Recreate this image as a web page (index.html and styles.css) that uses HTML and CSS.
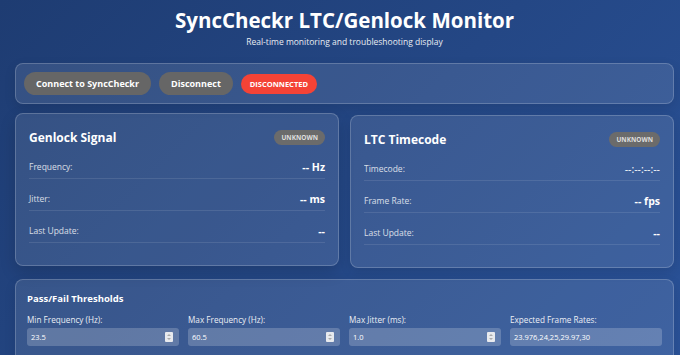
FILE: index.html
```html
<!DOCTYPE html>
<html lang="en">

<head>
    <meta charset="UTF-8">
    <title>SyncCheckr LTC/Genlock Monitor</title>
    <link rel="stylesheet" href="styles.css">
</head>

<body>
    <div class="container">

        <div class="header">
            <h1>SyncCheckr LTC/Genlock Monitor</h1>
            <p>Real-time monitoring and troubleshooting display</p>
        </div>

        <div class="panel controls">
            <button class="btn">Connect to SyncCheckr</button>
            <button class="btn">Disconnect</button>
            <span class="conn_status">DISCONNECTED</span>
        </div>

        <div class="cards">
            <div class="panel card card_raised">
                <div class="card_head">
                    <h2>Genlock Signal</h2>
                    <span class="badge">UNKNOWN</span>
                </div>
                <div class="row"><span class="row_label">Frequency:</span><span class="row_value">-- Hz</span></div>
                <div class="row"><span class="row_label">Jitter:</span><span class="row_value">-- ms</span></div>
                <div class="row"><span class="row_label">Last Update:</span><span class="row_value">--</span></div>
            </div>

            <div class="panel card">
                <div class="card_head">
                    <h2>LTC Timecode</h2>
                    <span class="badge">UNKNOWN</span>
                </div>
                <div class="row"><span class="row_label">Timecode:</span><span class="row_value tc">--:--:--:--</span></div>
                <div class="row"><span class="row_label">Frame Rate:</span><span class="row_value">-- fps</span></div>
                <div class="row"><span class="row_label">Last Update:</span><span class="row_value">--</span></div>
            </div>
        </div>

        <div class="panel thresholds">
            <h3>Pass/Fail Thresholds</h3>
            <div class="th_grid">
                <div class="th_item">
                    <label for="minFreq">Min Frequency (Hz):</label>
                    <div class="field"><input type="text" id="minFreq" value="23.5"><span class="spin"></span></div>
                </div>
                <div class="th_item">
                    <label for="maxFreq">Max Frequency (Hz):</label>
                    <div class="field"><input type="text" id="maxFreq" value="60.5"><span class="spin"></span></div>
                </div>
                <div class="th_item">
                    <label for="maxJitter">Max Jitter (ms):</label>
                    <div class="field"><input type="text" id="maxJitter" value="1.0"><span class="spin"></span></div>
                </div>
                <div class="th_item">
                    <label for="rates">Expected Frame Rates:</label>
                    <div class="field"><input type="text" id="rates" value="23.976,24,25,29.97,30"></div>
                </div>
            </div>
        </div>

    </div>
</body>

</html>
```

FILE: styles.css
```css
* {
    box-sizing: border-box;
}

body {
    margin: 0;
    min-height: 355px;
    background: linear-gradient(135deg, #1e3c72 0%, #2a5298 100%);
    color: white;
    font-family: "Open Sans", "Noto Sans", sans-serif;
    overflow: hidden;
}

.container {
    width: 659px;
    margin-left: 15px;
}

.header {
    text-align: center;
    padding-top: 5px;
}

.header h1 {
    margin: 0;
    font-size: 20.5px;
    font-weight: 700;
    line-height: 30px;
}

.header p {
    margin: 1px 0 0;
    font-size: 8.5px;
    line-height: 12px;
    opacity: 0.9;
}

.panel {
    background: rgba(255, 255, 255, 0.1);
    border: 1px solid rgba(255, 255, 255, 0.2);
    border-radius: 8px;
    box-shadow: 0 4px 12px rgba(0, 0, 0, 0.1);
}

.controls {
    margin-top: 15px;
    height: 41px;
    padding: 0 8px;
    display: flex;
    align-items: center;
    gap: 8px;
}

.btn {
    height: 23px;
    padding: 0 12px;
    border: none;
    border-radius: 12px;
    background: #666;
    color: white;
    font-family: inherit;
    font-size: 9px;
    font-weight: 700;
}

.conn_status {
    height: 20px;
    line-height: 20px;
    padding: 0 9px;
    border-radius: 10px;
    background: #f44336;
    font-size: 7.5px;
    font-weight: 700;
}

.cards {
    display: grid;
    grid-template-columns: 1fr 1fr;
    gap: 11px;
    margin-top: 11px;
}

.card {
    height: 153px;
    padding: 13px 13px 0;
}

.card_raised {
    transform: translateY(-2px);
    box-shadow: 0 6px 16px rgba(0, 0, 0, 0.15);
}

.card_head {
    display: flex;
    justify-content: space-between;
    align-items: center;
    height: 20px;
}

.card_head h2 {
    margin: 0;
    font-size: 12px;
    font-weight: 700;
}

.badge {
    height: 15px;
    line-height: 15px;
    padding: 0 7px;
    border-radius: 8px;
    background: #6b6b6b;
    color: #ddd;
    font-size: 6.5px;
    font-weight: 700;
}

.row {
    display: flex;
    justify-content: space-between;
    align-items: flex-end;
    height: 32px;
    padding-bottom: 4px;
    border-bottom: 1px solid rgba(255, 255, 255, 0.1);
}

.row_label {
    font-size: 8.5px;
    line-height: 14px;
    opacity: 0.8;
}

.row_value {
    font-size: 10.5px;
    line-height: 14px;
    font-weight: 700;
}

.row_value.tc {
    font-size: 10.5px;
    font-weight: 400;
}

.thresholds {
    margin-top: 11px;
    height: 90px;
    padding: 12px 11px;
}

.thresholds h3 {
    margin: 0 0 9px;
    font-size: 9.5px;
    font-weight: 700;
}

.th_grid {
    display: grid;
    grid-template-columns: repeat(4, 1fr);
    gap: 9px;
}

.th_item label {
    display: block;
    font-size: 8.2px;
    opacity: 0.9;
    margin-bottom: 3px;
}

.field {
    display: flex;
    align-items: center;
    height: 18px;
    padding: 0 6px 0 4px;
    border-radius: 3px;
    background: rgba(255, 255, 255, 0.2);
}

.field input {
    flex: 1;
    min-width: 0;
    border: none;
    background: transparent;
    color: white;
    font-family: inherit;
    font-size: 7.5px;
    padding: 0;
    outline: none;
}

.spin {
    width: 8px;
    height: 10px;
    background: #e8eaee;
    border-radius: 1px;
    position: relative;
}

.spin::before,
.spin::after {
    content: "";
    position: absolute;
    left: 2px;
    border-left: 2px solid transparent;
    border-right: 2px solid transparent;
}

.spin::before {
    top: 2px;
    border-bottom: 2px solid #aaa;
}

.spin::after {
    bottom: 2px;
    border-top: 2px solid #aaa;
}
```
